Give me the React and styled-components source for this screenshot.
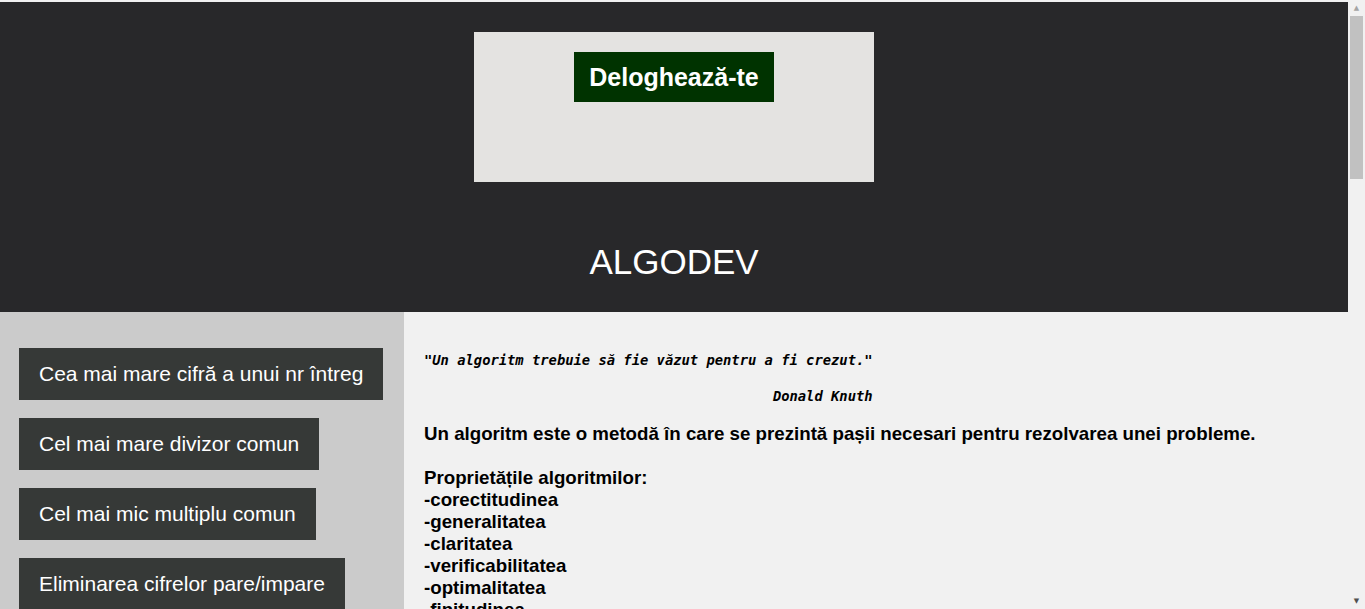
import React from "react"
import styled, { createGlobalStyle } from "styled-components"

const algoritmi = [
  "Cea mai mare cifră a unui nr întreg",
  "Cel mai mare divizor comun",
  "Cel mai mic multiplu comun",
  "Eliminarea cifrelor pare/impare",
]

const proprietati = [
  "corectitudinea",
  "generalitatea",
  "claritatea",
  "verificabilitatea",
  "optimalitatea",
  "finitudinea",
]

const App = () => {
  return (
    <>
      <GlobalStyle />
      <Page>
        <Header>
          <LoginBox>
            <LogoutButton type='button'>Deloghează-te</LogoutButton>
          </LoginBox>
          <Title>ALGODEV</Title>
        </Header>
        <Layout>
          <Sidebar>
            {algoritmi.map((a) => (
              <SideButton key={a} type='button'>
                {a}
              </SideButton>
            ))}
          </Sidebar>
          <Main>
            <Quote>
              <QuoteText>"Un algoritm trebuie să fie văzut pentru a fi crezut."</QuoteText>
              <QuoteAuthor>Donald Knuth</QuoteAuthor>
            </Quote>
            <Text>
              Un algoritm este o metodă în care se prezintă pașii necesari pentru
              rezolvarea unei probleme.
            </Text>
            <Text>Proprietățile algoritmilor:</Text>
            <List>
              {proprietati.map((p) => (
                <li key={p}>-{p}</li>
              ))}
            </List>
          </Main>
        </Layout>
      </Page>
      {/* the browser's scrollbar, which the screenshot shows */}
      <ScrollTrack>
        <ScrollArrow $up>▲</ScrollArrow>
        <ScrollThumb />
        <ScrollArrow>▼</ScrollArrow>
      </ScrollTrack>
    </>
  )
}

export default App

const GlobalStyle = createGlobalStyle`
  html, body {
    margin: 0;
    padding: 0;
    overflow: hidden;
  }

  body {
    background: #f1f1f1;
    font-family: "Liberation Sans", Arial, sans-serif;
  }
`

const Page = styled.div`
  margin-right: 17px;
  padding-top: 2px;
`

const ScrollTrack = styled.div`
  position: fixed;
  top: 0;
  right: 0;
  bottom: 0;
  width: 17px;
  background: #f1f1f1;
  display: flex;
  flex-direction: column;
  align-items: center;
`

const ScrollArrow = styled.div`
  height: 16px;
  width: 17px;
  font-size: 7px;
  line-height: 16px;
  text-align: center;
  color: ${(p) => (p.$up ? "#a3a3a3" : "#505050")};
  font-family: "DejaVu Sans", sans-serif;
`

const ScrollThumb = styled.div`
  width: 13px;
  height: 163px;
  background: #c1c1c1;
  margin-bottom: auto;
`

const Header = styled.header`
  background: #28282a;
  padding: 30px 0;
  display: flex;
  flex-direction: column;
  align-items: center;
`

const LoginBox = styled.div`
  width: 400px;
  height: 150px;
  background: #e4e3e1;
  display: flex;
  justify-content: center;
  align-items: flex-start;
  padding-top: 20px;
  box-sizing: border-box;
`

const LogoutButton = styled.button`
  width: 200px;
  height: 50px;
  background: #003300;
  color: #ffffff;
  border: none;
  font-family: inherit;
  font-size: 25px;
  font-weight: 700;
  cursor: pointer;
`

const Title = styled.h1`
  margin: 60px 0 0;
  color: #ffffff;
  font-size: 35px;
  font-weight: 400;
  line-height: 40px;
`

const Layout = styled.div`
  display: flex;
  min-height: 1840px;
`

const Sidebar = styled.nav`
  width: 404px;
  flex-shrink: 0;
  background: #cbcbcb;
  display: flex;
  flex-direction: column;
  align-items: flex-start;
  gap: 18px;
  padding: 36px 0 0 19px;
  box-sizing: border-box;
`

const SideButton = styled.button`
  background: #363937;
  color: #ffffff;
  border: none;
  font-family: inherit;
  font-size: 21px;
  line-height: 22px;
  padding: 15px 20px;
  cursor: pointer;
  text-align: left;
`

const Main = styled.main`
  flex: 1;
  padding: 20px;
  color: #000000;
`

const Quote = styled.figure`
  display: inline-block;
  margin: 20px 0 0;
  font-family: "DejaVu Sans Mono", "Liberation Mono", monospace;
  font-style: italic;
  font-weight: 700;
  font-size: 13.8px;
  line-height: 16px;
`

const QuoteText = styled.blockquote`
  margin: 0;
`

const QuoteAuthor = styled.figcaption`
  margin-top: 20px;
  text-align: right;
`

const Text = styled.p`
  margin: 18px 0 22px;
  font-size: 18.72px;
  font-weight: 700;
  line-height: 22px;

  & + & {
    margin: 0;
  }
`

const List = styled.ul`
  list-style: none;
  margin: 0;
  padding: 0;
  font-size: 18.72px;
  font-weight: 700;
  line-height: 22px;
`
